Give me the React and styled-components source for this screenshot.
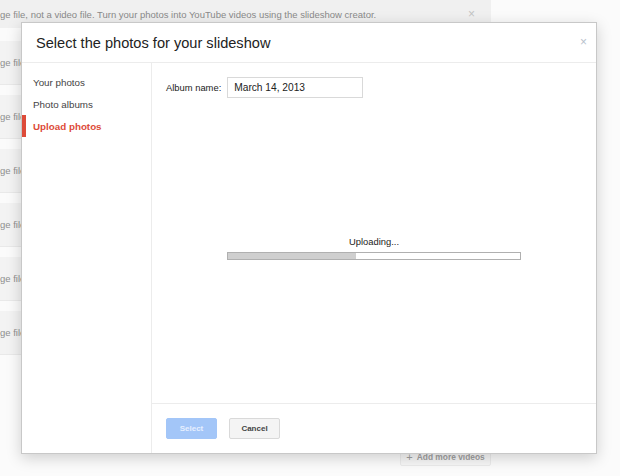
import React from 'react';
import styled, { createGlobalStyle } from 'styled-components';

const GlobalStyle = createGlobalStyle`
   body {
      margin: 0;
      background: #fbfbfb;
      font-family: "Liberation Sans", Arial, sans-serif;
   }
   * {
      box-sizing: border-box;
   }
`

const Page = styled.div`
   position: relative;
   width: 620px;
   height: 476px;
   overflow: hidden;
   background: #fbfbfb;
`

const BackColumn = styled.div`
   width: 491px;
   display: flex;
   flex-direction: column;
`

const Banner = styled.div`
   height: 28px;
   background: #f0f0f0;
   display: flex;
   align-items: center;
   justify-content: space-between;
   padding-right: 16px;
   font-size: 9.5px;
   color: #8a8a8a;
   white-space: nowrap;

   & .dismiss {
      color: #c4c4c4;
      font-size: 12px;
   }
`

const RowList = styled.div`
   display: flex;
   flex-direction: column;
   gap: 10px;
   margin-top: 13px;
`

const Row = styled.div`
   height: 44px;
   background: #f3f3f3;
   border-bottom: 1px solid #e9e9e9;
   display: flex;
   align-items: center;
   font-size: 9.5px;
   color: #8f8f8f;
`

const AddMore = styled.div`
   align-self: flex-end;
   margin-top: 92px;
   width: 91px;
   height: 19px;
   border: 1px solid #ececec;
   border-radius: 2px;
   background: #f7f7f7;
   display: flex;
   align-items: center;
   justify-content: center;
   gap: 4px;
   font-size: 8.4px;
   font-weight: bold;
   color: #a0a0a0;

   & .plus {
      font-size: 11px;
      font-weight: normal;
   }
`

const Dialog = styled.div`
   position: absolute;
   left: 21px;
   top: 22px;
   width: 576px;
   height: 432px;
   background: #fff;
   border: 1px solid #c8c8c8;
   box-shadow: 0 4px 14px rgba(0, 0, 0, 0.18);
   display: flex;
   flex-direction: column;
`

const Header = styled.div`
   position: relative;
   height: 40px;
   flex-shrink: 0;
   border-bottom: 1px solid #ececec;
   display: flex;
   align-items: center;
   padding-left: 14px;
`

const Title = styled.h1`
   margin: 0;
   font-size: 14.6px;
   font-weight: normal;
   color: #222;
`

const Close = styled.span`
   position: absolute;
   right: 9px;
   top: 13px;
   font-size: 12px;
   line-height: 12px;
   color: #b9c1cc;
`

const Body = styled.div`
   flex: 1;
   display: flex;
`

const Nav = styled.nav`
   width: 130px;
   border-right: 1px solid #ececec;
   padding-top: 8px;
   display: flex;
   flex-direction: column;
`

const NavItem = styled.div`
   height: 22px;
   display: flex;
   align-items: center;
   padding-left: ${p => p.$active ? '7px' : '11px'};
   border-left: ${p => p.$active ? '4px solid #dd4b39' : 'none'};
   font-size: 9.8px;
   font-weight: ${p => p.$active ? 'bold' : 'normal'};
   color: ${p => p.$active ? '#dd4b39' : '#444'};
`

const Main = styled.div`
   flex: 1;
   display: flex;
   flex-direction: column;
`

const Content = styled.div`
   flex: 1;
   padding: 14px 14px;
   display: flex;
   flex-direction: column;
`

const AlbumRow = styled.div`
   display: flex;
   align-items: center;
   gap: 6px;
   font-size: 9.4px;
   color: #222;
`

const AlbumInput = styled.div`
   width: 136px;
   height: 21px;
   border: 1px solid #d9d9d9;
   padding-left: 6px;
   display: flex;
   align-items: center;
   font-size: 10.2px;
   color: #222;
`

const UploadBlock = styled.div`
   margin-top: 138px;
   display: flex;
   flex-direction: column;
   align-items: center;
   gap: 5px;
   font-size: 9.4px;
   color: #222;
`

const ProgressTrack = styled.div`
   width: 294px;
   height: 8px;
   border: 1px solid #b0b0b0;
   background: #fff;
`

const ProgressFill = styled.div`
   height: 100%;
   background: #cfcfcf;
`

const Footer = styled.div`
   height: 50px;
   flex-shrink: 0;
   border-top: 1px solid #ececec;
   padding: 14px 14px 0;
   display: flex;
   align-items: flex-start;
   gap: 12px;
`

const Button = styled.div`
   width: 51px;
   height: 21px;
   border-radius: 2px;
   display: flex;
   align-items: center;
   justify-content: center;
   font-size: 8px;
   font-weight: bold;
   border: 1px solid ${p => p.$primary ? '#a3c6f8' : '#d9d9d9'};
   background: ${p => p.$primary ? '#a3c6f8' : '#f4f4f4'};
   color: ${p => p.$primary ? '#e6efff' : '#444'};
`

const rows = [0, 1, 2, 3, 4, 5];
const progress = 44;

const App = () => {
   return (
      <Page>
         <GlobalStyle />
         <BackColumn>
            <Banner>
               <span>ge file, not a video file. Turn your photos into YouTube videos using the slideshow creator.</span>
               <span className="dismiss">×</span>
            </Banner>
            <RowList>
               {rows.map(r => <Row key={r}>ge file</Row>)}
            </RowList>
            <AddMore><span className="plus">+</span>Add more videos</AddMore>
         </BackColumn>

         <Dialog>
            <Header>
               <Title>Select the photos for your slideshow</Title>
               <Close>×</Close>
            </Header>
            <Body>
               <Nav>
                  <NavItem>Your photos</NavItem>
                  <NavItem>Photo albums</NavItem>
                  <NavItem $active>Upload photos</NavItem>
               </Nav>
               <Main>
                  <Content>
                     <AlbumRow>
                        <span>Album name:</span>
                        <AlbumInput>March 14, 2013</AlbumInput>
                     </AlbumRow>
                     <UploadBlock>
                        <span>Uploading...</span>
                        <ProgressTrack>
                           <ProgressFill style={{ width: `${progress}%` }} />
                        </ProgressTrack>
                     </UploadBlock>
                  </Content>
                  <Footer>
                     <Button $primary>Select</Button>
                     <Button>Cancel</Button>
                  </Footer>
               </Main>
            </Body>
         </Dialog>
      </Page>
   )
}

export default App;
